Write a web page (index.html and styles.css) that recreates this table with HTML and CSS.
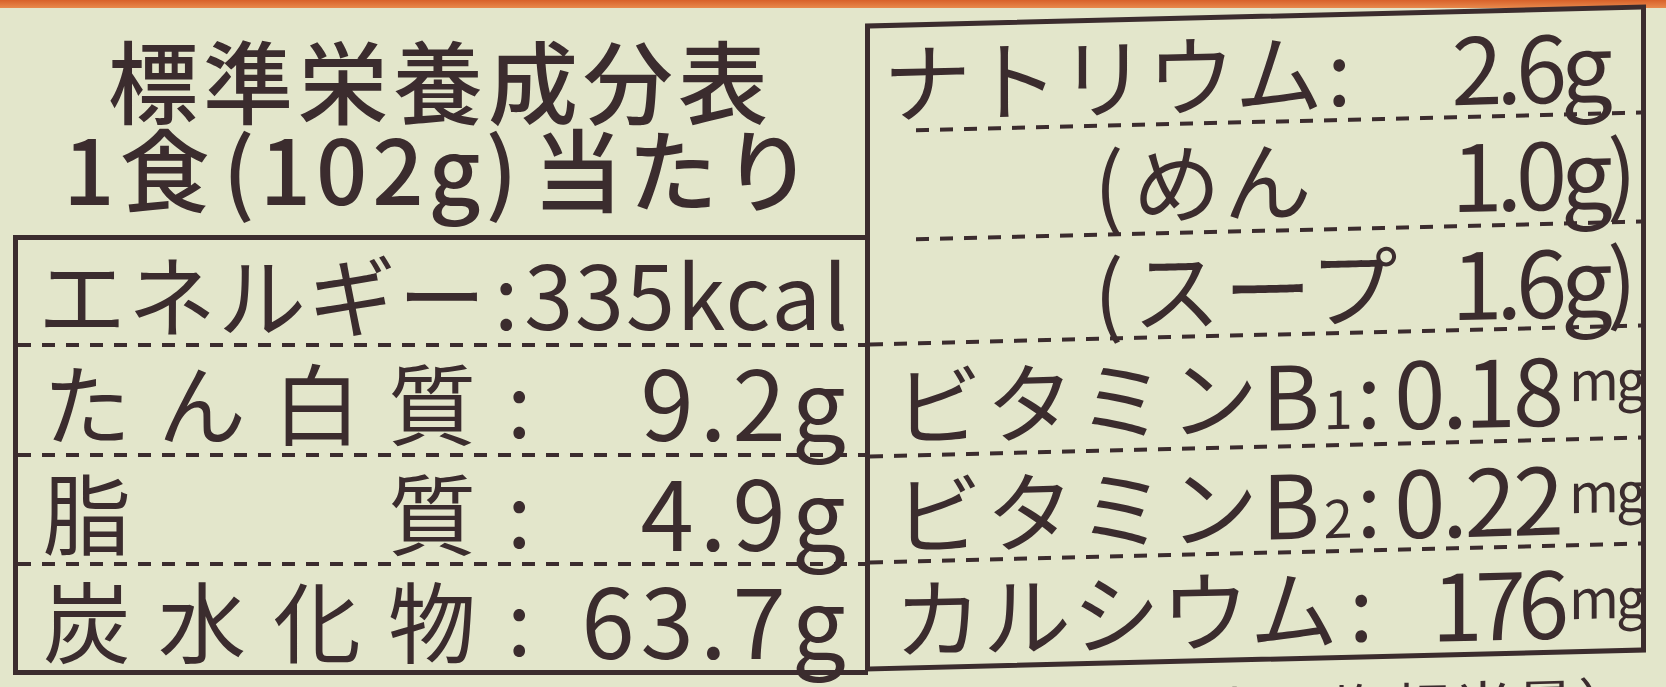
FILE: index.html
```html
<!DOCTYPE html>
<html lang="ja">
<head>
<meta charset="utf-8">
<title>標準栄養成分表</title>
<link rel="stylesheet" href="styles.css">
</head>
<body>
<div class="band"></div>
<div class="main">
  <div class="left">
    <div class="title">
      <div class="t1">標準栄養成分表</div>
      <div class="t2">1食<span class="pl">(</span>102g<span class="pr">)</span>当たり</div>
    </div>
    <div class="lbox">
      <div class="lrow dash r1">
        <span class="elab">エネルギー</span><span class="ecolon">:</span><span class="eval">335kcal</span>
      </div>
      <div class="lrow dash r2">
        <span class="cells"><span class="cell">た</span><span class="cell">ん</span><span class="cell">白</span><span class="cell">質</span></span><span class="colon">:</span><span class="val">9.2g</span>
      </div>
      <div class="lrow dash r3">
        <span class="cells"><span class="cell">脂</span><span class="cell"></span><span class="cell"></span><span class="cell">質</span></span><span class="colon">:</span><span class="val">4.9g</span>
      </div>
      <div class="lrow r4">
        <span class="cells"><span class="cell">炭</span><span class="cell">水</span><span class="cell">化</span><span class="cell">物</span></span><span class="colon">:</span><span class="val">63.7g</span>
      </div>
    </div>
  </div>
  <div class="right">
    <div class="rbox">
      <div class="rrow dash-in q1">
        <span class="lab na">ナトリウム</span><span class="colon c-na">:</span><span class="rval tight">2.6g</span><span class="tail"></span>
      </div>
      <div class="rrow dash-in q2 sub">
        <span class="lab"><span class="paren">(</span>めん</span><span class="rval tight">1.0g</span><span class="tail">)</span>
      </div>
      <div class="rrow dash q3 sub">
        <span class="lab"><span class="paren">(</span>スープ</span><span class="rval tight">1.6g</span><span class="tail">)</span>
      </div>
      <div class="rrow dash q4 vit">
        <span class="lab">ビタミンB<span class="idx">1</span></span><span class="colon c-vit">:</span><span class="rval mid">0.18</span><span class="unit">mg</span>
      </div>
      <div class="rrow dash q5 vit">
        <span class="lab">ビタミンB<span class="idx">2</span></span><span class="colon c-vit">:</span><span class="rval mid">0.22</span><span class="unit">mg</span>
      </div>
      <div class="rrow q6 ca">
        <span class="lab">カルシウム</span><span class="colon c-ca">:</span><span class="rval tighter">176</span><span class="unit">mg</span>
      </div>
    </div>
    <div class="foot">ー・含む塩相当量）</div>
  </div>
</div>
</body>
</html>
```
FILE: styles.css
```css
* {
  box-sizing: border-box;
  margin: 0;
  padding: 0;
}

body {
  margin: 0;
  width: 1666px;
  height: 687px;
  overflow: hidden;
  background: #e3e6cb;
  color: #3b2c2e;
  font-family: "Noto Sans CJK JP", "Noto Sans", sans-serif;
}

.band {
  height: 8px;
  background: linear-gradient(#d8612a, #e8894c);
}

.main {
  display: flex;
  padding-left: 13px;
}

.left {
  width: 855px;
  flex: none;
}

.title {
  height: 227px;
  padding-top: 26px;
  text-align: center;
  font-size: 90px;
  font-weight: 500;
  line-height: 88px;
  letter-spacing: 5px;
  white-space: nowrap;
}

.t2 .pl {
  margin-left: 8px;
}

.t2 .pr {
  margin-right: 10px;
}

.lbox {
  height: 440px;
  border: 5px solid #3b2c2e;
  border-right: none;
  display: flex;
  flex-direction: column;
}

.lrow {
  display: flex;
  align-items: center;
  padding: 0 16px 0 25px;
  font-size: 88px;
  line-height: 1;
  white-space: nowrap;
}

.lrow > span {
  flex: none;
}

.dash {
  padding-bottom: 4px;
  background: repeating-linear-gradient(to right, #3b2c2e 0 13px, transparent 13px 24px) left bottom / 100% 4px no-repeat;
}

.r1 { height: 107px; padding-left: 20px; padding-right: 18px; }
.r2 { height: 110px; }
.r3 { height: 109px; }
.r4 { height: 104px; }

.elab {
  letter-spacing: 2px;
}

.ecolon {
  margin-left: 6px;
}

.eval {
  margin-left: auto;
  letter-spacing: 2px;
}

.cells {
  display: flex;
}

.cell {
  width: 115px;
}

.colon {
  margin-left: 4px;
}

.val {
  margin-left: auto;
  font-size: 96px;
  letter-spacing: 6px;
}

.right {
  width: 781px;
  margin-left: -3px;
  flex: none;
}

.rbox {
  margin-top: 6px;
  height: 648px;
  border: 5px solid #3b2c2e;
  display: flex;
  flex-direction: column;
  transform: skewY(-1.4deg);
}

.rrow {
  display: flex;
  align-items: center;
  padding: 0 10px 0 13px;
  font-size: 88px;
  line-height: 1;
  white-space: nowrap;
}

.rrow > span {
  flex: none;
}

.dash-in {
  padding-bottom: 4px;
  background: repeating-linear-gradient(to right, #3b2c2e 0 13px, transparent 13px 24px) 46px bottom / calc(100% - 46px) 4px no-repeat;
}

.q1 { height: 105px; }
.q2 { height: 109px; }
.q3 { height: 104px; }
.q4 { height: 112px; }
.q5 { height: 106px; }
.q6 { height: 102px; }

.lab {
  letter-spacing: 0;
}

.sub .lab {
  margin-left: 211px;
  letter-spacing: 3px;
}

.paren {
  margin-right: 6px;
}

.vit .lab,
.ca .lab {
  margin-left: 11px;
}

.vit .lab {
  letter-spacing: 4px;
}

.ca .lab {
  letter-spacing: 1px;
}

.idx {
  font-size: 52px;
  letter-spacing: 0;
}

.c-na { margin-left: 4px; }
.c-vit { margin-left: 4px; }
.c-ca { margin-left: 10px; }

.rval {
  margin-left: auto;
  font-size: 92px;
  letter-spacing: 0;
}

.rval.tight {
  letter-spacing: -6px;
}

.rval.mid {
  letter-spacing: -3px;
}

.rval.tighter {
  letter-spacing: -8px;
}

.tail {
  width: 24px;
  text-align: right;
}

.unit {
  align-self: flex-start;
  margin-top: 22px;
  margin-left: 8px;
  width: 62px;
  font-size: 54px;
  letter-spacing: -3px;
  line-height: 1;
}

.foot {
  margin-top: 19px;
  padding-right: 6px;
  text-align: right;
  font-size: 58px;
  line-height: 1;
  letter-spacing: 4px;
  white-space: nowrap;
  transform: skewY(-1.4deg);
}
```
